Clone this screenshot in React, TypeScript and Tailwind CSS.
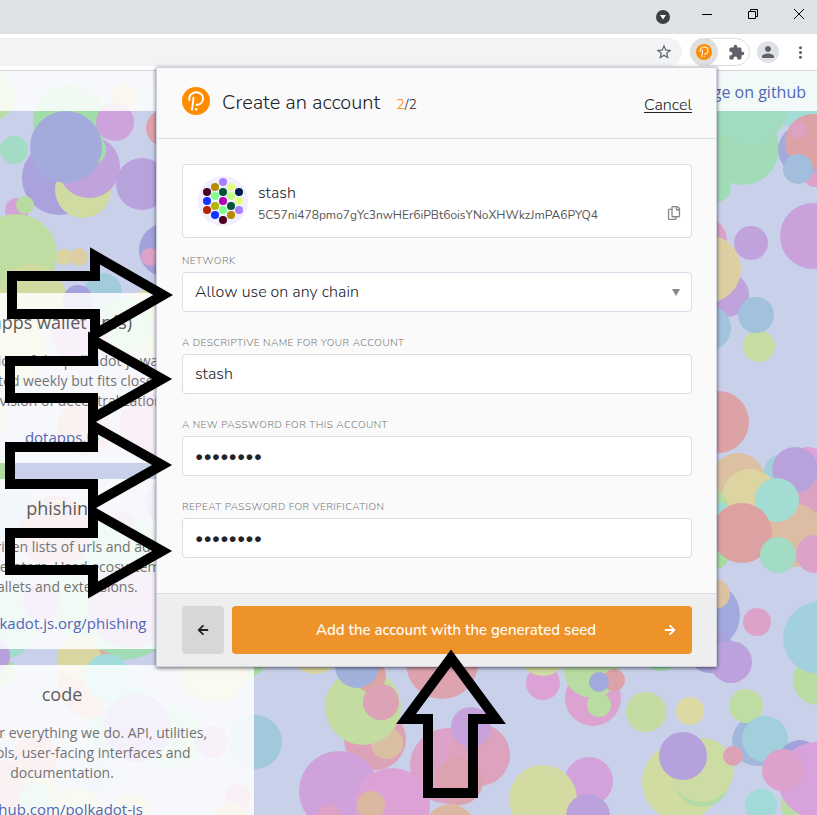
import React from "react";
import { MdStarBorder, MdExtension, MdPerson, MdMoreVert } from "react-icons/md";
import { FaRegCopy, FaArrowLeft, FaArrowRight } from "react-icons/fa";

type Bubble = [x: number, y: number, r: number, fill: string];

// Painted back to front.
const bubbles: Bubble[] = [
  [-10, 95, 26, "#b9dca0"],
  [124, 96, 13, "#dcc8a2"],
  [166, 75, 14, "#dca2b0"],
  [70, 122, 37, "#a2dca8"],
  [59, 178, 37, "#aaa2dc"],
  [83, 190, 28, "#d0dba1"],
  [89, 167, 31, "#c0a2dc"],
  [90, 150, 16, "#a2dca8"],
  [115, 122, 19, "#cea2dc"],
  [66, 147, 36, "#a2abdc"],
  [164, 128, 18, "#dca2a8"],
  [142, 184, 26, "#b7a2dc"],
  [14, 150, 14, "#a2dcc4"],
  [17, 210, 12, "#d6a2dc"],
  [25, 205, 9, "#b8dc9f"],
  [16, 255, 41, "#bfdca2"],
  [32, 298, 34, "#d0dba1"],
  [64, 257, 8, "#dcd5a2"],
  [79, 257, 9, "#dccea2"],
  [103, 292, 19, "#a2ccdc"],
  [78, 300, 15, "#a4a2dc"],
  [166, 250, 27, "#a4a2dc"],
  [150, 257, 9, "#dca2c8"],
  [10, 350, 36, "#dcdca2"],
  [150, 322, 32, "#dcdca2"],
  [125, 325, 28, "#a2dcb0"],
  [80, 335, 28, "#d0a2dc"],
  [-20, 420, 26, "#dcdca2"],
  [84, 428, 27, "#dca8a2"],
  [152, 425, 32, "#dca2d0"],
  [0, 470, 16, "#b0dca0"],
  [10, 515, 28, "#a2c8dc"],
  [165, 502, 20, "#b7a2dc"],
  [120, 590, 70, "#a2dcb7"],
  [55, 532, 36, "#dca2b0"],
  [122, 522, 11, "#c8a2dc"],
  [-10, 602, 16, "#b7a2dc"],
  [130, 606, 42, "#c8a2dc"],
  [0, 624, 36, "#a2dcc8"],
  [41, 602, 18, "#c0a2dc"],
  [127, 618, 12, "#c0a2dc"],
  [164, 630, 12, "#dca2a2"],
  [0, 672, 15, "#a8dca2"],
  [-8, 656, 18, "#b7a0dc"],
  [93, 684, 35, "#dcaca2"],
  [79, 658, 22, "#dbd5a2"],
  [107, 677, 23, "#a2dbdb"],
  [130, 712, 27, "#a2dbdb"],
  [108, 735, 22, "#a2dcc0"],
  [173, 738, 30, "#a2dcb7"],
  [137, 728, 34, "#b7a2dc"],
  [212, 742, 16, "#d0a2dc"],
  [35, 757, 22, "#dca2b0"],
  [98, 777, 15, "#a2c8dc"],
  [40, 800, 22, "#dcd5a2"],
  [0, 785, 25, "#dca2a8"],
  [35, 799, 16, "#a2dcc4"],
  [80, 816, 27, "#d4dba2"],
  [132, 811, 18, "#dcd5a2"],
  [238, 797, 13, "#dca2c8"],
  [230, 816, 15, "#dcc8a2"],
  [240, 650, 30, "#a8dca2"],
  [213, 668, 34, "#dcdca2"],
  [255, 742, 27, "#a2c8dc"],
  [315, 649, 25, "#dcd5a2"],
  [375, 739, 31, "#dca2b7"],
  [387, 743, 16, "#dac0a2"],
  [363, 707, 38, "#c3dca2"],
  [370, 676, 16, "#dca4a2"],
  [357, 666, 22, "#a2b0dc"],
  [381, 702, 18, "#dca2b5"],
  [442, 663, 36, "#dca2ad"],
  [448, 766, 38, "#dca2c8"],
  [479, 755, 31, "#dca2be"],
  [471, 727, 20, "#c8a2dc"],
  [459, 781, 24, "#dca2b0"],
  [339, 791, 40, "#d0a2dc"],
  [330, 817, 13, "#dca2c8"],
  [392, 806, 38, "#dca2d5"],
  [371, 805, 14, "#dbb8a2"],
  [450, 829, 25, "#dcb8a2"],
  [589, 781, 24, "#d3a2dc"],
  [543, 799, 34, "#d4dba2"],
  [588, 816, 22, "#bca2dc"],
  [543, 683, 17, "#dca2d5"],
  [543, 652, 24, "#d0dca2"],
  [593, 698, 28, "#dca2d0"],
  [592, 670, 28, "#b8dca2"],
  [599, 705, 12, "#b8dca2"],
  [614, 680, 11, "#dca2a8"],
  [599, 682, 10, "#a2a9dc"],
  [661, 650, 21, "#a2dcb0"],
  [646, 712, 20, "#c3dca2"],
  [690, 711, 14, "#dcdaa2"],
  [681, 782, 39, "#d0dca2"],
  [702, 779, 28, "#b0dca5"],
  [702, 770, 32, "#cddca2"],
  [683, 756, 24, "#b5a2dc"],
  [757, 741, 25, "#a2b7dc"],
  [746, 706, 17, "#bfdca2"],
  [765, 739, 23, "#a2cfdc"],
  [761, 805, 16, "#a2dad8"],
  [801, 806, 20, "#b8dca2"],
  [800, 762, 22, "#a2a2dc"],
  [816, 780, 38, "#d8a2dc"],
  [783, 770, 21, "#dca2cc"],
  [733, 756, 10, "#dca2b5"],
  [757, 622, 14, "#dca2c8"],
  [818, 680, 25, "#b8dca2"],
  [819, 638, 36, "#a2d0dc"],
  [706, 615, 34, "#a2a9dc"],
  [710, 650, 23, "#a6a2dc"],
  [731, 662, 21, "#bca2dc"],
  [715, 594, 15, "#dcc2a2"],
  [795, 95, 32, "#a2dcd5"],
  [743, 149, 36, "#a2dcb7"],
  [717, 188, 14, "#a2dcb7"],
  [750, 108, 37, "#a2dcc0"],
  [815, 175, 12, "#dca2c8"],
  [803, 150, 25, "#a2abdc"],
  [813, 142, 28, "#dca2a5"],
  [798, 130, 9, "#dca2c0"],
  [798, 169, 15, "#a2bedc"],
  [813, 236, 33, "#c9a2dc"],
  [751, 243, 17, "#c0a2dc"],
  [705, 240, 22, "#dca2c8"],
  [727, 295, 22, "#c0a2dc"],
  [707, 269, 34, "#dcd0a2"],
  [708, 328, 23, "#a2c4dc"],
  [759, 346, 16, "#c7dca2"],
  [756, 315, 18, "#a2c1dc"],
  [718, 422, 31, "#dca2a5"],
  [738, 480, 27, "#dcc0a2"],
  [785, 475, 22, "#a2cfdc"],
  [750, 497, 28, "#dcd5a2"],
  [808, 466, 19, "#dca2d5"],
  [817, 490, 24, "#dca2c4"],
  [795, 470, 23, "#b7a2dc"],
  [793, 535, 32, "#dcbca2"],
  [777, 500, 22, "#a2dcd2"],
  [715, 555, 14, "#a8dca2"],
  [705, 510, 24, "#b8dca2"],
  [720, 512, 10, "#a2dbd5"],
  [742, 533, 30, "#dca2a2"],
  [778, 555, 18, "#a2dcc4"],
  [815, 554, 19, "#dca2c8"],
];

const arrows = [
  "M12 276H95V256L163 295L95 334V314H12Z",
  "M10 361H93V340L162 379L93 418V398H10Z",
  "M10 447H93V426L162 465L93 504V484H10Z",
  "M10 533H93V512L162 551L93 590V570H10Z",
  "M451 658L406 719H428V793H473V719H496Z",
];

const identicon: [number, number, string][] = [
  [9, 16, "#4b0020"], [9, 25, "#1133ff"], [9, 34, "#b82200"],
  [17, 11, "#b58900"], [17, 20, "#80ff90"], [17, 30, "#b5b500"], [17, 39, "#1133ff"],
  [25, 6, "#a880ff"], [25, 16, "#005533"], [25, 25, "#b000b0"], [25, 34, "#80ff90"], [25, 44, "#4b0020"],
  [33, 11, "#e3ff80"], [33, 20, "#c0ff80"], [33, 30, "#005533"], [33, 39, "#b58900"],
  [41, 16, "#001a50"], [41, 25, "#e0ff80"], [41, 34, "#a880ff"],
];

const Logo = ({ className }: { className: string }) => (
  <svg viewBox="0 0 28 28" className={className} aria-hidden="true">
    <circle cx="14" cy="14" r="14" fill="#ff8c00" />
    <path
      d="M7.3 13.2C6.6 8.6 9.8 5.2 14.2 5.2C18.3 5.2 21 8 21 11.5C21 15.2 18.2 17.9 14.6 17.8M11.4 10.6C11.6 14.5 10.4 19 9.9 22.6"
      fill="none"
      stroke="#fff"
      strokeWidth="1.9"
      strokeLinecap="round"
    />
    <circle cx="14.2" cy="22.3" r="1.3" fill="#fff" />
  </svg>
);

const BrowserChrome = () => (
  <>
    <div className="flex h-[34px] items-start justify-end bg-[#dee1e6] text-black">
      <svg viewBox="0 0 14 14" className="mr-[14px] mt-[10px] size-[14px]" aria-hidden="true">
        <circle cx="7" cy="7" r="7" fill="#3c4043" />
        <path d="M4 5H10L7 9.6Z" fill="#fff" />
      </svg>
      <button aria-label="Minimize" className="flex h-7 w-[46px] items-center justify-center">
        <svg viewBox="0 0 10 10" className="size-[10px]"><path d="M0 5.5H10" stroke="currentColor" /></svg>
      </button>
      <button aria-label="Restore" className="flex h-7 w-[46px] items-center justify-center">
        <svg viewBox="0 0 10 10" className="size-[10px]" fill="none" stroke="currentColor">
          <path d="M.5 2.5H7.5V9.5H.5ZM2.5 2.5V.5H9.5V7.5H7.5" />
        </svg>
      </button>
      <button aria-label="Close" className="-mr-[5px] flex h-7 w-[46px] items-center justify-center">
        <svg viewBox="0 0 10 10" className="size-[10px]"><path d="M0 0L10 10M10 0L0 10" stroke="currentColor" /></svg>
      </button>
    </div>
    <div className="flex h-[37px] items-center border-b border-[#d5d7da] bg-white pr-[7px] text-[#5f6368]">
      <div className="flex h-7 flex-1 items-center justify-end rounded-r-full bg-[#f1f3f4] pr-[9px]">
        <MdStarBorder className="size-[18px]" />
      </div>
      <div className="ml-2 flex h-7 w-[60px] items-center rounded-full border border-[#dadce0]">
        <button aria-label="Wallet extension" className="-ml-px flex size-7 items-center justify-center rounded-full bg-[#dfdfdf]">
          <Logo className="size-4" />
        </button>
        <button aria-label="Extensions" className="ml-[10px]">
          <MdExtension className="size-[17px]" />
        </button>
      </div>
      <button aria-label="Profile" className="ml-[7px] flex size-[22px] items-center justify-center rounded-full bg-[#dee1e6]">
        <MdPerson className="size-[18px]" />
      </button>
      <button aria-label="Menu" className="ml-3">
        <MdMoreVert className="size-[19px]" />
      </button>
    </div>
  </>
);

const Card = ({ title, lines, link }: { title: string; lines: string[]; link: string }) => (
  <section className="flex w-[384px] flex-col items-center whitespace-nowrap bg-white/85 p-4 text-sm leading-5 text-[#737373]">
    <h2 className="mb-4 text-lg leading-[26px] text-[#5c5c5c]">{title}</h2>
    {lines.map((line) => (
      <p key={line}>{line}</p>
    ))}
    <a href="#" className="mt-4 text-[15px] text-[#5366b5]">{link}</a>
  </section>
);

const Field = ({ id, label, children }: { id: string; label: string; children: React.ReactNode }) => (
  <div className="pt-4">
    <label htmlFor={id} className="mb-1 block text-[10px] leading-[14px] uppercase tracking-wider text-[#777]">
      {label}
    </label>
    {children}
  </div>
);

const box = "block h-10 w-full rounded border border-[#d9dce9] bg-white px-3 text-base text-[#222327] outline-none";

const Popup = () => (
  <form className="absolute right-[100px] top-[67px] flex h-[600px] w-[561px] flex-col border border-[#ced2e0] bg-[#fafafa] font-['Nunito','Open_Sans',sans-serif] font-light text-[#222327] shadow-[0_1px_4px_rgba(0,0,0,0.6)]">
    <header className="flex h-[71px] items-center border-b border-[#d9dce9] pl-[25px] pr-6">
      <Logo className="-mt-1 size-7" />
      <h1 className="ml-3 text-xl">Create an account</h1>
      <span className="ml-4 mt-1 text-sm"><span className="text-[#ff7d01]">2</span>/2</span>
      <a href="#" className="ml-auto mt-1 text-base underline underline-offset-2">Cancel</a>
    </header>
    <div className="flex-1 pl-[25px] pr-6 pt-[25px]">
      <div className="flex h-[74px] items-center rounded border border-[#d9dce9] bg-white px-[15px]">
        <svg viewBox="0 0 50 50" className="size-[50px]" aria-hidden="true">
          <circle cx="25" cy="25" r="25" fill="#f0eeff" />
          {identicon.map(([x, y, fill]) => (
            <circle key={`${x}-${y}`} cx={x} cy={y} r="4" fill={fill} />
          ))}
        </svg>
        <div className="ml-[10px] pt-1">
          <div className="text-base leading-6">stash</div>
          <div className="text-xs leading-5 font-normal text-[#555]">5C57ni478pmo7gYc3nwHEr6iPBt6oisYNoXHWkzJmPA6PYQ4</div>
        </div>
        <button type="button" aria-label="Copy address" className="-mr-[5px] ml-auto mt-6 text-[#888]">
          <FaRegCopy className="size-[14px]" />
        </button>
      </div>
      <div className="flex flex-col gap-2">
        <Field id="network" label="Network">
          <div className="relative">
            <select id="network" className={box + " appearance-none"}>
              <option>Allow use on any chain</option>
            </select>
            <svg viewBox="0 0 8 7" className="pointer-events-none absolute right-3 top-[17px] h-[7px] w-2" aria-hidden="true">
              <path d="M0 0H8L4 7Z" fill="#888" />
            </svg>
          </div>
        </Field>
        <Field id="name" label="A descriptive name for your account">
          <input id="name" className={box} defaultValue="stash" />
        </Field>
        <Field id="password" label="A new password for this account">
          <input id="password" type="password" className={box} defaultValue="password" />
        </Field>
        <Field id="repeat" label="Repeat password for verification">
          <input id="repeat" type="password" className={box} defaultValue="password" />
        </Field>
      </div>
    </div>
    <footer className="flex h-[73px] gap-2 border-t border-[#d9dce9] bg-[#eee] py-3 pl-[25px] pr-6">
      <button type="button" aria-label="Back" className="flex w-[42px] items-center justify-center rounded bg-[#d7d7d7]">
        <FaArrowLeft className="size-3" />
      </button>
      <button type="submit" className="flex flex-1 items-center rounded bg-[#ee932a] pl-4 pr-4 text-[15px] font-medium text-white">
        <span className="flex-1 text-center">Add the account with the generated seed</span>
        <FaArrowRight className="size-3" />
      </button>
    </footer>
  </form>
);

export default function App() {
  return (
    <div className="relative h-screen overflow-hidden bg-[#c9d0ea] font-['Segoe_UI','Open_Sans',sans-serif]">
      <svg className="absolute inset-0 size-full" aria-hidden="true">
        {bubbles.map(([x, y, r, fill], i) => (
          <circle key={i} cx={x} cy={y} r={r} fill={fill} />
        ))}
      </svg>
      <div className="relative">
        <BrowserChrome />
        <div className="flex h-10 items-center justify-end bg-white/85 px-[11px] pt-0.5">
          <a href="#" className="text-base text-[#5366b5]">homepage on github</a>
        </div>
        <main className="-ml-[130px] mt-[182px] flex flex-col gap-4">
          <Card
            title="apps wallet (ipfs)"
            lines={["The ipfs version of the polkadot-js wallet. It is", "updated weekly but fits closer", "to the vision of decentralization."]}
            link="dotapps.io"
          />
          <Card
            title="phishing"
            lines={["Community-driven lists of urls and addresses of", "of scam operators. Used ecosystem-wide", "wallets and extensions."]}
            link="polkadot.js.org/phishing"
          />
          <Card
            title="code"
            lines={["The home for everything we do. API, utilities,", "clients, tools, user-facing interfaces and", "documentation."]}
            link="github.com/polkadot-js"
          />
        </main>
      </div>
      <Popup />
      <svg className="pointer-events-none absolute inset-0 size-full" fill="none" stroke="#000" strokeWidth="10" aria-hidden="true">
        {arrows.map((d) => (
          <path key={d} d={d} />
        ))}
      </svg>
    </div>
  );
}
